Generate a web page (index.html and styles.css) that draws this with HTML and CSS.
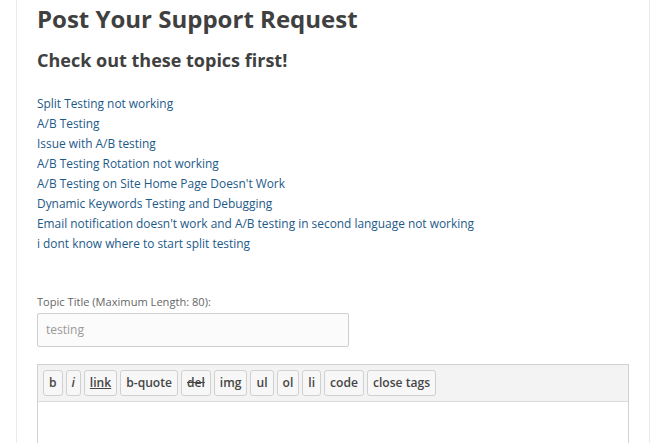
FILE: index.html
```html
<!DOCTYPE html>
<html>
<head>
<meta charset="utf-8">
<link rel="stylesheet" href="styles.css">
</head>
<body>
<div class="page">
  <h1 class="title">Post Your Support Request</h1>
  <h2 class="subtitle">Check out these topics first!</h2>
  <ul class="topics">
    <li><a href="#">Split Testing not working</a></li>
    <li><a href="#">A/B Testing</a></li>
    <li><a href="#">Issue with A/B testing</a></li>
    <li><a href="#">A/B Testing Rotation not working</a></li>
    <li><a href="#">A/B Testing on Site Home Page Doesn't Work</a></li>
    <li><a href="#">Dynamic Keywords Testing and Debugging</a></li>
    <li><a href="#">Email notification doesn't work and A/B testing in second language not working</a></li>
    <li><a href="#">i dont know where to start split testing</a></li>
  </ul>
  <label class="label">Topic Title (Maximum Length: 80):</label>
  <div class="input">testing</div>
  <div class="editor">
    <div class="toolbar">
      <span class="btn">b</span>
      <span class="btn it">i</span>
      <span class="btn ul-text">link</span>
      <span class="btn">b-quote</span>
      <span class="btn strike">del</span>
      <span class="btn">img</span>
      <span class="btn">ul</span>
      <span class="btn">ol</span>
      <span class="btn">li</span>
      <span class="btn">code</span>
      <span class="btn">close tags</span>
    </div>
    <div class="area"></div>
  </div>
</div>
</body>
</html>
```
FILE: styles.css
```css
html, body {
  margin: 0;
  padding: 0;
  background: #fff;
}
body {
  font-family: "Open Sans", "Liberation Sans", sans-serif;
  color: #444;
}
.page {
  margin-left: 16px;
  border-left: 1px solid #ebebeb;
  border-right: 1px solid #ebebeb;
  padding: 0 20px;
  box-sizing: content-box;
  height: 443px;
  width: 592px;
  overflow: hidden;
}
.title {
  font-size: 24px;
  font-weight: 700;
  line-height: 30px;
  margin: 4px 0 0;
  color: #404040;
}
.subtitle {
  font-size: 18px;
  font-weight: 700;
  line-height: 24px;
  margin: 14px 0 0;
  color: #404040;
}
.topics {
  list-style: none;
  margin: 21px 0 0;
  padding: 0;
  font-size: 11.9px;
  line-height: 20px;
}
.topics a {
  color: #1d5a88;
  text-decoration: none;
}
.label {
  display: block;
  margin-top: 39px;
  font-size: 11.1px;
  line-height: 20px;
  color: #666;
}
.input {
  margin-top: 1px;
  width: 312px;
  height: 34px;
  box-sizing: border-box;
  border: 1px solid #cfcfcf;
  border-radius: 2px;
  background: #fbfbfb;
  font-size: 12px;
  line-height: 32px;
  padding: 0 8px;
  color: #999;
}
.editor {
  margin-top: 17px;
  border: 1px solid #d1d1d1;
  border-bottom: none;
  height: 200px;
}
.toolbar {
  background: #f3f3f3;
  border-bottom: 1px solid #dcdcdc;
  padding: 5px 5px;
  display: flex;
  gap: 3px;
  height: 26px;
}
.btn {
  border: 1px solid #d0d0d0;
  border-radius: 3px;
  background: #f7f7f7;
  font-size: 12.1px;
  font-weight: 600;
  color: #464646;
  padding: 0 5px;
  height: 26px;
  line-height: 24px;
  box-sizing: border-box;
}
.it { font-style: italic; }
.ul-text { text-decoration: underline; }
.strike { text-decoration: line-through; }
.area {
  background: #fff;
}
```
